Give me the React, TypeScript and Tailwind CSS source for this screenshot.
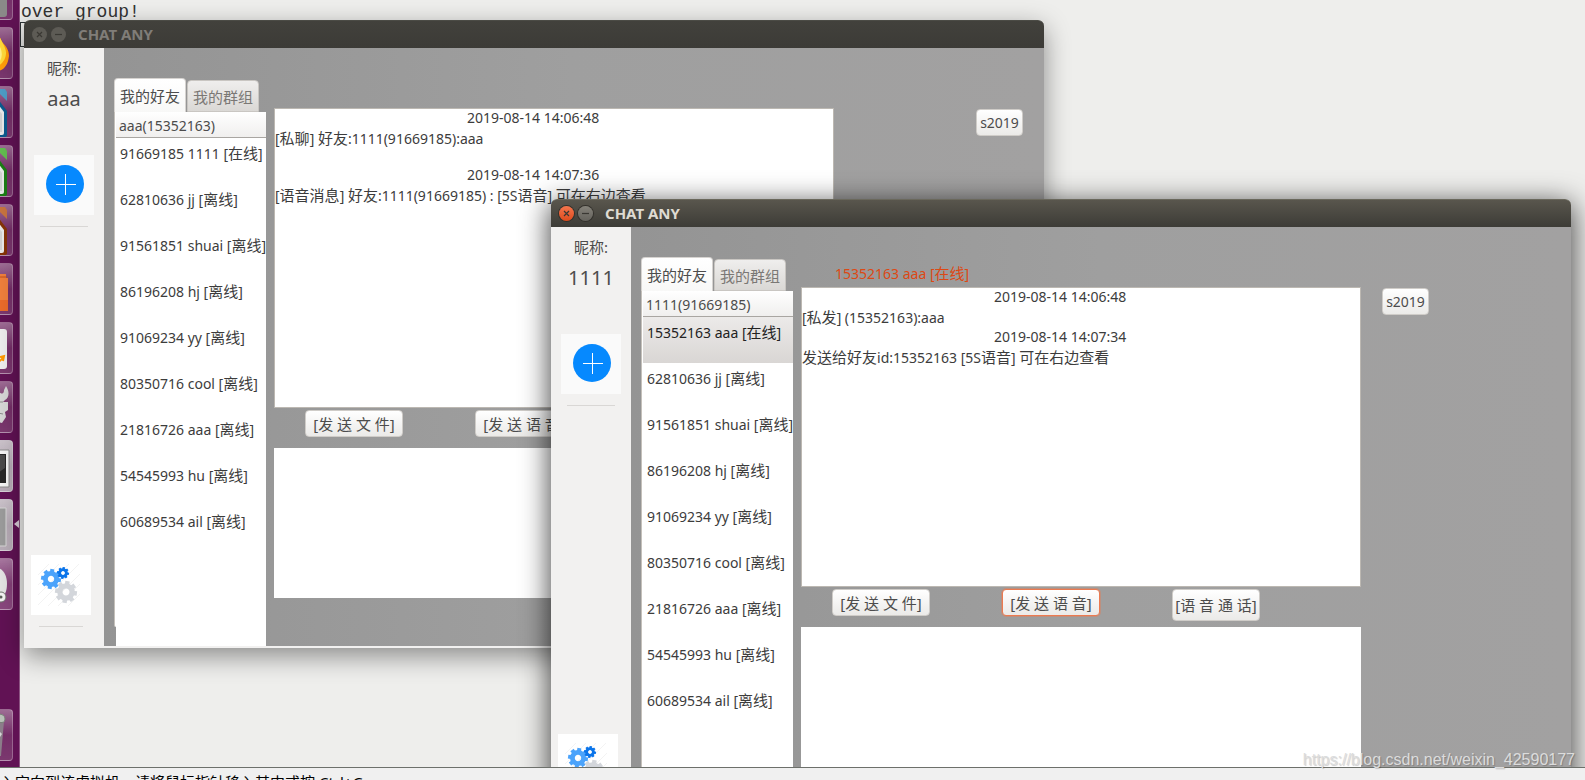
import type { ReactNode } from 'react';
import clsx from 'clsx';

type Friend = { id: string; name: string; online?: boolean };
type LogLine = { kind: 'time' | 'text' | 'blank'; text?: string };

type ChatSession = {
  nickname: string;
  account: string;
  friends: Friend[];
  log: LogLine[];
  voiceAlign: string;
  selected?: string;
  focusedAction?: string;
};

const COMMON_FRIENDS: Friend[] = [
  { id: '62810636', name: 'jj' },
  { id: '91561851', name: 'shuai' },
  { id: '86196208', name: 'hj' },
  { id: '91069234', name: 'yy' },
  { id: '80350716', name: 'cool' },
  { id: '21816726', name: 'aaa' },
  { id: '54545993', name: 'hu' },
  { id: '60689534', name: 'ail' },
];

const FIRST_SESSION: ChatSession = {
  nickname: 'aaa',
  account: '15352163',
  friends: [{ id: '91669185', name: '1111', online: true }, ...COMMON_FRIENDS],
  log: [
    { kind: 'time', text: '2019-08-14 14:06:48' },
    { kind: 'text', text: '[私聊] 好友:1111(91669185):aaa' },
    { kind: 'blank' },
    { kind: 'time', text: '2019-08-14 14:07:36' },
    { kind: 'text', text: '[语音消息] 好友:1111(91669185) : [5S语音] 可在右边查看' },
  ],
  voiceAlign: 'justify-end',
};

const SECOND_SESSION: ChatSession = {
  nickname: '1111',
  account: '91669185',
  friends: [{ id: '15352163', name: 'aaa', online: true }, ...COMMON_FRIENDS],
  log: [
    { kind: 'time', text: '2019-08-14 14:06:48' },
    { kind: 'text', text: '[私发] (15352163):aaa' },
    { kind: 'time', text: '2019-08-14 14:07:34' },
    { kind: 'text', text: '发送给好友id:15352163 [5S语音] 可在右边查看' },
  ],
  voiceAlign: 'justify-start',
  selected: '15352163',
  focusedAction: '[发 送 语 音]',
};

const friendLabel = (friend: Friend) => `${friend.id} ${friend.name} [${friend.online ? '在线' : '离线'}]`;

// Chinese glyphs are set one step larger than the latin text around them
const MixedText = ({ text }: { text: string }) => (
  <span className="whitespace-pre">
    {text.split(/([\u4e00-\u9fff]+)/).map((part, index) => (
      index % 2 ? <span key={index} className="text-[15px]">{part}</span> : part
    ))}
  </span>
);

const Gear = ({ cx, cy, r, color }: { cx: number; cy: number; r: number; color: string }) => (
  <g transform={`translate(${cx} ${cy})`} fill={color}>
    {[0, 45, 90, 135, 180, 225, 270, 315].map(angle => (
      <rect key={angle} x={-r * 0.2} y={-r} width={r * 0.4} height={r * 0.45} transform={`rotate(${angle + 8})`} />
    ))}
    <circle r={r * 0.56} fill="none" stroke={color} strokeWidth={r * 0.48} />
  </g>
);

const SettingsArt = () => (
  <svg viewBox="0 0 60 60" className="size-full">
    <g stroke="#f3f3f3">
      <path d="M7 20 18 9M7 30 28 9M7 40 38 9M7 50 48 9M17 51 49 19M27 51 49 29M37 51 49 39" />
    </g>
    <Gear cx={20} cy={24} r={10} color="#4ba3fb" />
    <Gear cx={32} cy={18} r={6} color="#0a74ea" />
    <Gear cx={35} cy={37} r={11} color="#d3d6db" />
  </svg>
);

const AddArt = () => (
  <svg viewBox="0 0 60 60" className="size-full">
    <circle cx="31" cy="29" r="19" fill="#0689fe" />
    <path d="M22 29.5h20M31.5 19v21" stroke="#fff" strokeWidth="1" />
  </svg>
);

const WindowButton = ({ label, active, path }: { label: string; active: boolean; path: string }) => (
  <button
    aria-label={label}
    className={clsx(
      'size-[15px] rounded-full',
      !active && 'bg-[#5d5b55]',
      active && label === 'Close' && 'bg-linear-to-b from-[#f4754c] to-[#df4a1a] ring-1 ring-[#33312c]',
      active && label !== 'Close' && 'bg-linear-to-b from-[#85827a] to-[#64625c] ring-1 ring-[#33312c]',
    )}
  >
    <svg viewBox="0 0 15 15" className="size-full">
      <path d={path} stroke="#3a3833" strokeWidth="1.2" fill="none" />
    </svg>
  </button>
);

const PushButton = ({ children, className, focused }: { children: ReactNode; className: string; focused?: boolean }) => (
  <button
    className={clsx(
      'rounded-[4px] border bg-linear-to-b from-white to-[#ebeae8] whitespace-nowrap text-[#4c4c4c]',
      focused ? 'border-[#ec7a50] ring-1 ring-[#ec7a50]/40' : 'border-[#cfccc8]',
      className,
    )}
  >
    {children}
  </button>
);

const ChatWindow = ({ session, active, className }: { session: ChatSession; active: boolean; className: string }) => {
  const current = session.friends.find(friend => friend.id === session.selected);
  const actions = [
    { label: '[发 送 文 件]', size: 'h-[27px] w-[98px]' },
    { label: '[发 送 语 音]', size: 'h-[27px] w-[98px]' },
    { label: '[语 音 通 话]', size: 'h-8 w-[88px]' },
  ];

  return (
    <section
      className={clsx(
        'absolute w-[1020px] rounded-t-md',
        active ? 'shadow-[0_6px_28px_2px_rgba(0,0,0,0.7)]' : 'shadow-[0_8px_26px_0_rgba(0,0,0,0.42)]',
        className,
      )}
    >
      <header
        className={clsx(
          'flex h-7 items-center gap-1 rounded-t-md border-t pl-2',
          active
            ? 'border-[#6a685c] bg-linear-to-b from-[#59564d] to-[#3d3c37]'
            : 'border-[#4b4b45] bg-linear-to-b from-[#42413c] to-[#3c3b37]',
        )}
      >
        <WindowButton label="Close" active={active} path="M5 5l5 5M10 5l-5 5" />
        <WindowButton label="Minimize" active={active} path="M4 7.5h7" />
        <h1 className={clsx('ml-2 text-[15px] font-bold', active ? 'text-[#dfdbd2]' : 'text-[#807d78]')}>CHAT ANY</h1>
      </header>

      <div className="flex h-[600px] bg-[#f2f1f0] pb-0.5">
        <aside className="flex w-20 flex-col text-[#4c4c4c]">
          <p className="mt-2 h-6 text-center text-[15px] leading-6">昵称:</p>
          <p className="mt-[5px] h-7 text-center text-xl leading-7">{session.nickname}</p>
          <button aria-label="Add friend" className="mt-[42px] ml-2.5 size-[60px] bg-[#fafafa]">
            <AddArt />
          </button>
          <hr className="mx-4 mt-[11px] border-[#d9d7d5]" />
          <button aria-label="Settings" className="mt-auto ml-[7px] size-[60px] bg-white">
            <SettingsArt />
          </button>
          <hr className="mt-[11px] mr-[21px] mb-[19px] ml-[15px] border-[#d9d7d5]" />
        </aside>

        <main className="flex flex-1 bg-[#9c9c9c] bg-linear-to-r from-[#949494] via-[#9f9f9f] to-[#a2a1a1] pl-2.5">
          <div className="flex w-[152px] flex-col pt-[31px]">
            <div role="tablist" className="flex h-[33px] items-end gap-px">
              <button role="tab" aria-selected className="h-[34px] w-[72px] rounded-t-[4px] border border-b-0 border-[#d6d3d0] bg-linear-to-b from-white to-[#f8f8f7] pt-0.5 text-[15px] text-[#4c4c4c]">
                我的好友
              </button>
              <button role="tab" aria-selected={false} className="h-8 w-[72px] rounded-t-[4px] border border-[#c9c6c2] bg-linear-to-b from-[#efeeed] to-[#dad8d5] pt-0.5 text-[15px] text-[#7b7875]">
                我的群组
              </button>
            </div>
            <div className="flex min-h-0 flex-1">
              <div className="h-[515px] w-0.5 rounded-bl-[2px] border-l border-[#c4c0ba] bg-white" />
              <div className="flex-1 overflow-hidden bg-white">
                <h2 className="h-[26px] border-b border-[#a9a6a2] bg-linear-to-b from-white to-[#f0efee] pl-[3px] text-sm leading-7 text-[#4c4c4c]">
                  {session.nickname}({session.account})
                </h2>
                <ul>
                  {session.friends.map(friend => (
                    <li key={friend.id}>
                      <button
                        className={clsx(
                          'flex h-[46px] w-full pt-[3px] pl-1 text-left text-sm leading-6 whitespace-nowrap text-[#3c3c3c]',
                          friend.id === session.selected && 'bg-linear-to-b from-[#eceae9] to-[#d9d6d4] text-[#222222]',
                        )}
                      >
                        <MixedText text={friendLabel(friend)} />
                      </button>
                    </li>
                  ))}
                </ul>
              </div>
            </div>
          </div>

          <div className="ml-2 flex w-[560px] flex-col">
            <p className="h-[60px] pt-[34px] pl-[34px] text-sm leading-6 text-[#dd4814]">
              {current && <MixedText text={friendLabel(current)} />}
            </p>
            <div role="log" className="h-[300px] border border-[#bcb8b2] bg-white text-sm whitespace-nowrap text-[#3c3c3c]">
              {session.log.map((line, index) => (
                <p
                  key={index}
                  className={clsx(
                    line.kind === 'time' && 'h-[18px] pl-48 leading-[18px]',
                    line.kind === 'text' && 'h-[22px] leading-[22px]',
                    line.kind === 'blank' && 'h-[17px]',
                  )}
                >
                  {line.text && <MixedText text={line.text} />}
                </p>
              ))}
            </div>
            <div className="flex h-10 items-start gap-[72px] pt-0.5 pl-[31px]">
              {actions.map(action => (
                <PushButton
                  key={action.label}
                  focused={action.label === session.focusedAction}
                  className={clsx('pt-px text-[15px]', action.size)}
                >
                  {action.label}
                </PushButton>
              ))}
            </div>
            <textarea aria-label="Message" className="h-[150px] resize-none bg-white p-1 text-sm outline-none" />
          </div>

          <div className={clsx('flex flex-1 items-start px-[21px] pt-[61px]', session.voiceAlign)}>
            <PushButton className="h-[27px] w-[47px] text-sm">s2019</PushButton>
          </div>
        </main>
      </div>
    </section>
  );
};

const DocArt = ({ color, dark }: { color: string; dark: string }) => (
  <>
    <path d="M-2 2H5L7 5V14L-2 5Z" fill={color} />
    <path d="M-2 15V12L7 24V48Q7 50 4 50H-2" fill={dark} />
    <path d="M-2 17 4 25V46Q4 48 2 48H-2Z" fill="#e9e9e9" />
    <path d="M-2 22 2 27V45H-2Z" fill="#d2d2d2" />
  </>
);

const LAUNCHER: { name: string; tile: string; art: ReactNode }[] = [
  { name: 'Files', tile: 'bg-[#742e67]', art: <path d="M-2 0H7V45Q7 48 4 48H-2Z" fill="#8a8a88" /> },
  {
    name: 'Firefox',
    tile: 'bg-[#742e67]',
    art: (
      <>
        <path d="M-2 6C0 9 1 12 2 14 6 18 9 22 9 28 8 37 4 42-2 43Z" fill="#ff9d0a" />
        <path d="M-2 6C0 10 3 15 5 20 8 27 4 35-2 38Z" fill="#ffd93a" />
        <path d="M-2 16C3 22 3 31-2 35Z" fill="#fff08a" />
      </>
    ),
  },
  { name: 'Writer', tile: 'bg-[#742e67]', art: <DocArt color="#4d9dc6" dark="#0b5b8e" /> },
  { name: 'Calc', tile: 'bg-[#742e67]', art: <DocArt color="#63bd50" dark="#1c7d16" /> },
  { name: 'Impress', tile: 'bg-[#742e67]', art: <DocArt color="#c8743f" dark="#853407" /> },
  {
    name: 'Software',
    tile: 'bg-[#742e67]',
    art: (
      <>
        <path d="M-2 10H6V14H8V47H-2Z" fill="#ef7f3c" />
        <path d="M-2 36H8V47H-2Z" fill="#ea6b2b" />
        <path d="M-2 13H7" stroke="#c0511d" />
      </>
    ),
  },
  {
    name: 'Amazon',
    tile: 'bg-[#742e67]',
    art: (
      <>
        <path d="M-2 6H4Q7 6 7 9V43Q7 46 4 46H-2Z" fill="#ededed" />
        <path d="M-2 39C1 38 2 36 4 33M0 34 4 33 3 38" stroke="#f90" strokeWidth="2" fill="none" />
      </>
    ),
  },
  {
    name: 'System Settings',
    tile: 'bg-[#742e67]',
    art: (
      <>
        <path d="M-2 9C2 13 4 12 4 8L6 4C10 10 9 16 5 18L3 20H8V28L5 30 6 35 2 41-2 40Z" fill="#d6d6d6" />
        <path d="M-2 20H3M-2 31 3 32" stroke="#8c8c8c" />
      </>
    ),
  },
  {
    name: 'Terminal',
    tile: 'bg-[#b5a9b4]',
    art: (
      <>
        <path d="M-2 9H9V46H-2Z" fill="#f4f4f4" stroke="#8c8c8c" />
        <path d="M-2 13H6V42H-2Z" fill="#262626" />
        <path d="M-2 14H5V27L-2 32Z" fill="#494949" />
      </>
    ),
  },
  { name: 'Application', tile: 'bg-[#b5a9b4]', art: <path d="M-2 8H6V46H-2Z" fill="#9b9b9b" stroke="#d6d6d6" /> },
  {
    name: 'Disc',
    tile: 'bg-[#843f78]',
    art: (
      <>
        <path d="M-2 9C4 11 7 17 7 25S4 39-2 42Z" fill="#e4e4e4" />
        <ellipse cx="1" cy="38" rx="5" ry="5" fill="#f4f4f4" stroke="#70746e" />
        <circle cx="1" cy="38" r="1.5" fill="#5c5f5a" />
      </>
    ),
  },
];

const TrashArt = () => (
  <>
    <path d="M-2 10 4 11 1 46H-2Z" fill="#8b7d89" />
    <path d="M-2 4Q5 4 5 9T-2 12" fill="#b9c0b8" stroke="#788077" />
    <path d="M-2 20 2 24-2 30" fill="#d6d6d6" />
  </>
);

const LauncherTile = ({ name, tile, children }: { name: string; tile: string; children: ReactNode }) => (
  <button
    aria-label={name}
    className={clsx('h-[52px] w-[13px] shrink-0 overflow-hidden rounded-r-[4px] border border-l-0 border-white/25 bg-linear-to-b from-white/30 via-transparent to-white/5', tile)}
  >
    <svg viewBox="0 0 12 50" className="h-full w-full">{children}</svg>
  </button>
);

const Launcher = () => (
  <nav aria-label="Launcher" className="relative flex w-5 flex-col justify-between overflow-hidden border-r border-[#8d5583] bg-[#611254] pb-1.5">
    <div className="-mt-8 flex flex-col gap-[7px]">
      {LAUNCHER.map(item => (
        <LauncherTile key={item.name} name={item.name} tile={item.tile}>{item.art}</LauncherTile>
      ))}
    </div>
    <LauncherTile name="Trash" tile="bg-[#742e67]"><TrashArt /></LauncherTile>
    <svg viewBox="0 0 5 8" className="absolute top-[520px] right-0 h-2 w-[5px]">
      <path d="M5 0V8L0 4Z" fill="#dccfda" />
    </svg>
  </nav>
);

export default function App() {
  return (
    <div className="relative flex h-screen flex-col overflow-hidden bg-[#f0f0f0] font-['Noto_Sans','Noto_Sans_CJK_SC',sans-serif]">
      <div className="relative flex min-h-0 flex-1 overflow-hidden">
        <Launcher />
        <div className="flex-1 bg-[#eeeeec]">
          <p className="h-[22px] pl-px font-['Liberation_Mono',monospace] text-lg leading-6 text-[#333333]">over group!</p>
          <div className="h-[25px] w-3 border border-[#2e3436]" />
        </div>
        <ChatWindow session={FIRST_SESSION} active={false} className="top-5 left-6" />
        <ChatWindow session={SECOND_SESSION} active className="top-[199px] left-[551px]" />
      </div>
      <footer className="h-[13px] overflow-hidden border-t border-[#6d706b] pt-0.5">
        <p className="text-[15px] leading-6 whitespace-nowrap text-black">
          入定向到该虚拟机，请将鼠标指针移入其中或按 Ctrl+G。
        </p>
      </footer>
      <a
        href="https://blog.csdn.net/weixin_42590177"
        className="absolute right-2.5 bottom-2 font-['Liberation_Sans',Arial,sans-serif] text-base leading-6 text-[#dcdcdc] [text-shadow:1px_1px_1px_rgba(0,0,0,0.2)]"
      >
        https://blog.csdn.net/weixin_42590177
      </a>
    </div>
  );
}
